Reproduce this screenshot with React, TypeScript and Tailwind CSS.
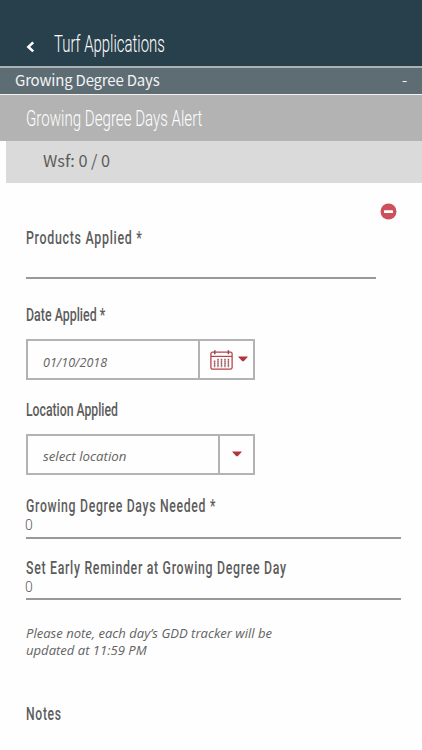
import type { ReactNode } from 'react'
import { clsx } from 'clsx'

const body = "font-['Noto_Sans_CJK_JP','Noto_Sans',sans-serif]"
const italic = "font-['Open_Sans',sans-serif] italic text-[13.5px] leading-[17px] text-[#636363]"

function Narrow({ className, children }: { className?: string; children: ReactNode }) {
  return (
    <span className={clsx('block w-max origin-left whitespace-nowrap', className)}>{children}</span>
  )
}

function Label({ className, children }: { className?: string; children: ReactNode }) {
  return (
    <Narrow className={clsx('text-[17.6px] leading-5 font-medium text-[#5c5c5c]', className)}>
      {children}
    </Narrow>
  )
}

function Caret() {
  return (
    <svg className="w-[10px] h-[6px] shrink-0 -mt-[2px]" viewBox="0 0 10 6">
      <path d="M0.2 0.4H9.8L9 1.8L5.9 5.1Q5 6 4.1 5.1L1 1.8Z" fill="#b3333f" />
    </svg>
  )
}

function CalendarIcon() {
  return (
    <svg className="w-[23px] h-[20px] shrink-0" viewBox="0 0 23 20" fill="none">
      <rect x="0.9" y="2.2" width="21.2" height="17" rx="1.6" stroke="#b8434e" strokeWidth="1.3" />
      <path d="M1 6.4H22" stroke="#b8434e" strokeWidth="1.2" />
      <path d="M4.8 0.2V4.2M18.4 0.2V4.2" stroke="#8c4a52" strokeWidth="1.5" />
      <path
        d="M4.6 10.6V17.2M8 8.8V17.2M11.5 8.8V17.2M15 8.8V17.2M18.4 8.8V17.2"
        stroke="#9c5a60"
        strokeWidth="1.5"
        strokeDasharray="1.6 0.4"
      />
    </svg>
  )
}

export default function App() {
  return (
    <div className="w-full h-[750px] overflow-hidden bg-[#fefefe] font-[Roboto,sans-serif]">
      {/* Header */}
      <header className="flex h-[66px] bg-[#28404c] pl-[26px] pt-[31px]">
        <svg className="w-[9px] h-[12px] mt-[10px]" viewBox="0 0 9 12" fill="none">
          <path d="M7.2 1.4L2.4 5.9L7.2 10.4" stroke="#fff" strokeWidth="2.6" />
        </svg>
        <Narrow className="ml-[19px] text-[23px] leading-7 font-light text-white scale-x-[0.65]">
          Turf Applications
        </Narrow>
      </header>

      {/* Section bar */}
      <div
        className={clsx(
          body,
          'flex h-[29px] justify-between border-t-2 border-b border-t-[#abb1b5] border-b-[#f4f4f4] bg-[#5e6d74] pl-[15px] pr-[15px] pt-[2px] text-[15px] leading-5 tracking-[-0.2px] text-[#f2f4f5]'
        )}
      >
        <span>Growing Degree Days</span>
        <span>-</span>
      </div>

      <div className="h-[46px] bg-[#b3b3b3] pl-[26px] pt-[10px]">
        <Narrow className="text-[22.6px] leading-7 font-light text-white scale-x-[0.668]">
          Growing Degree Days Alert
        </Narrow>
      </div>
      <div
        className={clsx(
          body,
          'ml-[6px] h-[42px] bg-[#dadada] pl-[37px] pt-[9px] text-[16.3px] leading-5 text-[#5c5c5c]'
        )}
      >
        Wsf: 0 / 0
      </div>

      {/* Form */}
      <main className="flex flex-col pl-[26px] pt-[20px] pr-[21px]">
        <button className="mr-[4px] h-[17px] w-[17px] self-end">
          <svg viewBox="0 0 17 17">
            <circle cx="8.5" cy="8.5" r="8" fill="#cd515c" />
            <rect x="4" y="7.2" width="9" height="2.8" rx="0.6" fill="#fff" />
          </svg>
        </button>

        <Label className="mt-2 tracking-[1px] scale-x-[0.705]">Products Applied *</Label>
        <div className="mt-[29px] h-[2px] w-[350px] bg-[#999]" />

        <Label className="mt-[26px] scale-x-[0.705]">Date Applied *</Label>
        <div className="mt-[14px] flex h-[41px] w-[229px] border-2 border-[#b3b3b3]">
          <div className="flex w-[172px] items-center border-r-2 border-[#b3b3b3] pl-[15px] pt-[5px]">
            <Narrow className={clsx(italic, 'scale-x-[0.93]')}>01/10/2018</Narrow>
          </div>
          <div className="flex flex-1 items-center justify-center gap-[5px] pl-[5px]">
            <CalendarIcon />
            <Caret />
          </div>
        </div>

        <Label className="mt-5 scale-x-[0.695]">Location Applied</Label>
        <div className="mt-[14px] flex h-[41px] w-[229px] border-2 border-[#b3b3b3]">
          <div className="flex w-[192px] items-center border-r-2 border-[#b3b3b3] pl-[15px] pt-[4px]">
            <Narrow className={clsx(italic, 'scale-x-[0.985]')}>select location</Narrow>
          </div>
          <div className="flex flex-1 items-center justify-center">
            <Caret />
          </div>
        </div>

        <Label className="mt-[21px] tracking-[1px] scale-x-[0.695]">Growing Degree Days Needed *</Label>
        <Narrow className="-ml-px text-[15.5px] leading-[18px] font-light text-[#5c5c5c] scale-x-[0.9]">0</Narrow>
        <div className="mt-[3px] h-[2px] bg-[#999]" />

        <Label className="mt-[19px] tracking-[1px] scale-x-[0.7]">
          Set Early Reminder at Growing Degree Day
        </Label>
        <Narrow className="-ml-px text-[15.5px] leading-[18px] font-light text-[#5c5c5c] scale-x-[0.9]">0</Narrow>
        <div className="mt-[2px] h-[2px] bg-[#999]" />

        <Narrow className={clsx(italic, 'mt-[25px] scale-x-[0.968]')}>
          Please note, each day’s GDD tracker will be
          <br />
          updated at 11:59 PM
        </Narrow>

        <Label className="mt-[45px] tracking-[1px] scale-x-[0.69]">Notes</Label>
      </main>
    </div>
  )
}
